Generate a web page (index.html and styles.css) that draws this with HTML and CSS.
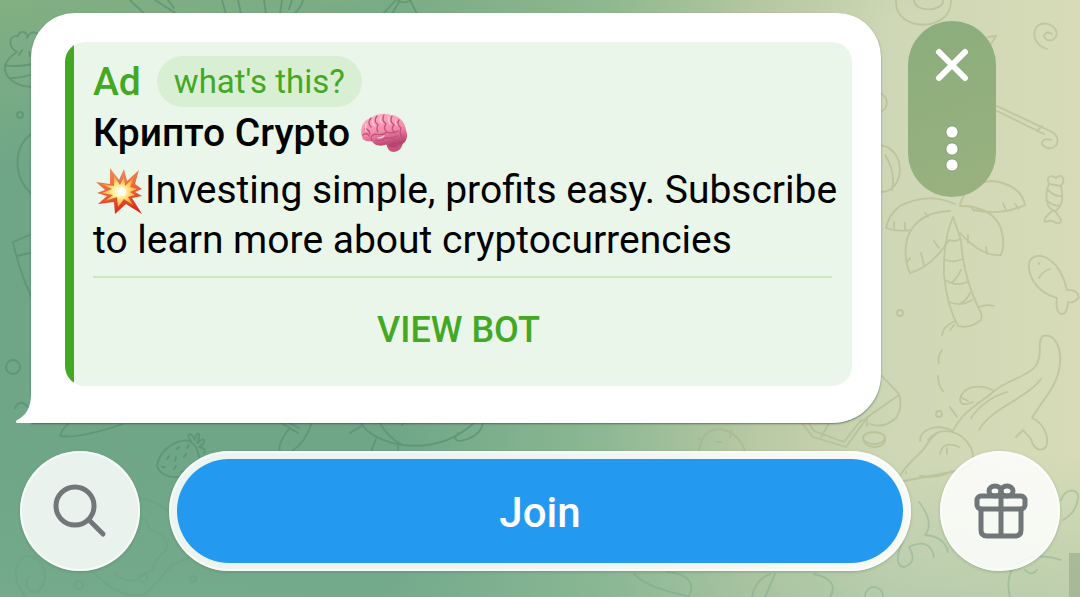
FILE: index.html
```
<!DOCTYPE html>
<html lang="en">
<head>
    <meta charset="UTF-8">
    <meta name="viewport" content="width=device-width, initial-scale=1.0">
    <title>Channel</title>
    <link rel="stylesheet" href="styles.css">
</head>
<body>
<svg class="wallpaper" viewBox="0 0 1080 597" preserveAspectRatio="xMidYMid slice" aria-hidden="true">
    <!-- left side -->
    <g class="doodle-dark">
        <path d="M17 52C8 47 8 35 18 36C20 28 29 33 27 38C30 30 38 31 40 38M17 52C9 57 4 63 5 70C7 80 18 87 34 87M5 65C12 67 22 66 34 64M12 78C20 78 27 76 34 74M22 50l-3 5M29 52l1 4"/>
        <circle cx="20" cy="115" r="3"/>
        <path d="M34 132C12 146 12 178 34 196M34 233L13 242C18 264 25 285 34 302M17 256L34 252"/>
        <circle cx="13" cy="367" r="7"/>
        <path d="M130 0C135 6 142 10 144 14M155 0L177 14M168 0L174 8M222 0L226 14M238 0L241 14M264 0L266 14M282 0L280 14M303 0Q301 8 294 14M292 0L289 9M396 0L383 14M400 0L392 14M410 0L417 14M398 1Q405 4 411 0"/>
        <path d="M15 408q5-10 13-1M73 421Q63 426 60 436Q78 439 123 424M280 422l18 11M287 422l12 6M289 429Q277 444 280 452M312 422Q306 442 291 452M360 422Q371 440 403 445Q445 450 475 422M379 422Q390 440 403 445M350 433l13-8M376 439l-5 13M398 444v8M455 438Q457 443 468 439Q481 434 483 423M455 438l3-5M402 425l2-3"/>
        <path d="M157 466C159 453 169 444 181 441C191 438 198 447 199 457M157 466C159 473 168 478 178 477M192 443C184 433 191 431 195 440M195 440C196 429 202 433 197 443M198 443C204 435 208 442 199 447M199 447Q207 448 204 453M199 434v6M177 449l2-2M187 448l2-3M167 459l2-3M175 461l1-4M184 457l2-3M162 467h3M174 469l2-3M181 472l3-1"/>
    </g>
    <g class="doodle-faint">
        <path d="M140 498Q157 501 169 512M140 518C151 519 143 528 156 532C169 537 170 548 162 554C153 559 158 571 145 573C137 584 123 582 116 574M92 571C108 588 129 600 146 594L172 565L190 557M26 596C12 583 12 558 29 556C47 559 50 583 37 592C27 594 22 579 31 576"/>
        <circle cx="79" cy="585" r="4"/><circle cx="143" cy="578" r="4"/><circle cx="193" cy="579" r="3"/>
        <path d="M634 574C650 590 678 593 690 597M667 572C691 574 695 586 689 595M752 597Q755 580 770 574M765 597L775 574M814 574Q840 580 830 597"/>
        <circle cx="874" cy="596" r="9"/>
        <path d="M919 502Q935 523 925 535Q944 536 948 552M903 540Q892 566 904 567Q918 563 909 547Q930 537 934 557M1061 500C1065 487 1080 488 1078 499Q1076 513 1063 520M1010 597C1000 555 1040 552 1061 560M1025 570q6 7 12 0"/>
    </g>
    <!-- right side -->
    <g class="doodle-light">
        <path d="M699 451C702 420 736 424 745 451M700 439l-2-1M732 430l-2 7M716 442h5M801 422L813 437L846 447L867 418M808 422l6 9L844 442L861 420M821 437l9-15"/>
        <ellipse cx="874" cy="438" rx="11" ry="6"/><path d="M863 438q1 9 12 9q11-1 10-9"/>
        <path d="M896 0C894 33 952 33 951 0M914 0C914 13 944 12 943 0M988 37l8-1l-5 8M880 93C890 98 888 111 880 111M880 145C908 149 905 193 880 192M885 155Q896 172 892 190"/>
        <path d="M1047 49C1028 43 1032 20 1048 24C1062 29 1057 43 1047 40C1041 36 1046 30 1052 34M997 106L1052 132C1062 139 1057 150 1048 148C1037 146 1043 136 1051 140M997 111L1044 134M1037 131l5-5"/>
        <path d="M1049 184C1045 175 1052 175 1056 178C1062 172 1066 180 1061 186C1064 199 1062 207 1055 211C1045 209 1045 193 1049 184M1049 184L1061 186M1048 190Q1055 197 1062 196M1046 200Q1053 206 1060 206M1052 211Q1041 221 1046 222Q1052 219 1056 223Q1063 224 1060 218L1055 211"/>
        <path d="M955 204Q928 192 900 206Q889 214 886 228Q897 232 911 230M950 211Q916 212 907 239Q903 258 910 273Q932 267 949 240M960 206Q990 206 1000 226Q1006 242 1001 255Q982 257 960 233M960 204Q967 182 993 181Q1021 185 1025 205Q1000 216 974 210M894 222v6M905 223v6M925 213l3 4M934 241l5 7M921 253l3 12M910 258l-3 4M968 235v8M986 247l1 7M1003 203l3 7M1015 204l4 5M970 206l4 5"/>
        <path d="M953 217Q943 240 944 275Q947 306 958 326Q970 329 981 320Q983 315 979 309Q963 276 961 240L953 217M949 240Q956 242 960 239M946 260Q954 263 962 259M945 280Q957 287 967 282M949 302Q961 307 972 300M961 270Q958 277 952 283M970 293Q966 301 961 303M979 307Q986 304 994 306M955 321Q943 326 942 335M954 325l-4 5M942 350Q937 357 939 363M938 376Q938 386 943 391M950 407l7 10"/>
        <circle cx="900" cy="313" r="3"/><circle cx="939" cy="414" r="3"/>
        <path d="M1057 298C1034 292 1024 269 1031 259C1040 250 1060 260 1067 290Q1077 289 1079 297Q1074 304 1068 302Q1067 315 1061 314Q1055 311 1057 298ZM1039 278Q1043 271 1050 269M1039 263v1M880 374L899 394Q903 407 896 418Q884 429 870 424M866 418L899 395M860 422q9-7 7 4"/>
        <path d="M953 431C964 409 981 403 994 391C1010 379 1026 377 1035 367C1044 356 1036 340 1043 336C1056 333 1063 350 1059 370C1056 387 1041 402 1032 418C1043 423 1050 436 1046 447C1040 453 1033 448 1031 439L1023 430L1016 437M971 418Q984 399 1007 392M979 430C990 409 1026 399 1041 379M994 391C981 384 963 385 960 399C960 407 968 404 973 402M962 398l6 3M953 431C937 423 920 429 920 441M928 440C940 425 962 430 971 448C977 461 969 470 956 471L899 482C896 478 908 464 919 454C928 447 925 442 936 434M940 454Q943 440 959 447M947 448v6M906 472v1M920 476Q940 479 952 471"/>
    </g>
</svg>
<div class="scroll-hint"></div>

<main class="chat">
    <div class="message-row">
        <article class="bubble">
            <svg class="bubble-tail" viewBox="0 0 30 40" aria-hidden="true">
                <path d="M15 0V8C15 21 10 30 1 34Q-1 36 1 37H30V0Z"/>
            </svg>
            <section class="ad">
                <div class="ad-head">
                    <span class="ad-label">Ad</span>
                    <button type="button" class="ad-info">what's this?</button>
                </div>
                <h1 class="ad-title">Крипто Crypto
                    <svg class="emoji" viewBox="0 0 48 40" role="img" aria-label="brain">
                        <defs>
                            <linearGradient id="brainFill" x1="0" y1="0" x2="0.3" y2="1">
                                <stop offset="0" stop-color="#ffb8cb"/>
                                <stop offset="0.6" stop-color="#f48bab"/>
                                <stop offset="1" stop-color="#b84370"/>
                            </linearGradient>
                        </defs>
                        <path d="M26 29Q27 39 34 39Q42 38 43 29Z" fill="#c9527c"/>
                        <path d="M2 24C-1 15 4 6 11 5C16 0 26 0 31 2C39 2 45 9 46 17C49 25 45 32 39 32C35 36 29 35 27 31C22 34 14 33 12 28C8 29 3 28 2 24Z" fill="url(#brainFill)"/>
                        <path d="M11 5Q7 10 11 14M5 16Q9 16 10 21M17 3Q13 8 18 12Q16 16 18 19M24 2Q21 7 26 11Q23 15 26 18M32 3Q29 8 34 12Q30 16 35 20M39 7Q36 11 41 15Q39 20 42 24M12 28Q9 22 16 21Q23 23 27 19Q33 21 38 18M16 27Q22 29 25 25Q32 26 37 23M27 31Q31 27 38 29M3 22Q7 19 9 23" fill="none" stroke="#c34f7c" stroke-width="1.3" stroke-linecap="round"/>
                        <path d="M13 7Q12 11 15 13M21 4Q19 8 22 10M29 4Q28 8 30 11M36 7Q34 10 37 12M6 11Q5 15 6 18M18 25Q22 25 24 23" fill="none" stroke="#ffd0dd" stroke-width="1.2" stroke-linecap="round"/>
                    </svg>
                </h1>
                <p class="ad-text"><svg class="emoji emoji-boom" viewBox="0 0 52 48" role="img" aria-label="collision">
                        <defs>
                            <linearGradient id="boomFill" x1="0.4" y1="0" x2="0.6" y2="1">
                                <stop offset="0" stop-color="#f08a62"/>
                                <stop offset="0.5" stop-color="#ea6337"/>
                                <stop offset="1" stop-color="#d9261c"/>
                            </linearGradient>
                            <radialGradient id="boomCore">
                                <stop offset="0" stop-color="#ffffff"/>
                                <stop offset="0.35" stop-color="#fff3a0"/>
                                <stop offset="1" stop-color="#ffa52e"/>
                            </radialGradient>
                        </defs>
                        <path d="M17 1L26 13L31 2L34 14L46 3L42 17L49 22L42 25L49 29L39 31L49 47L33 37L22 47L21 35L5 37L14 29L4 26L12 23L3 15L17 17Z" fill="url(#boomFill)"/>
                        <path d="M21 9L27 18L31 10L32 19L41 10L37 20L44 22L37 25L42 28L35 30L40 38L31 32L25 40L24 30L12 34L20 28L9 26L19 22L9 17L21 19Z" fill="url(#boomCore)"/>
                        <circle cx="29" cy="25" r="4" fill="#fff"/>
                    </svg>Investing simple, profits easy. Subscribe to learn more about cryptocurrencies</p>
                <button type="button" class="ad-action">VIEW BOT</button>
            </section>
        </article>
        <div class="ad-controls">
            <button type="button" class="control" aria-label="Close ad">
                <svg viewBox="0 0 40 40" class="icon-close"><path d="M7 7L33 33M33 7L7 33"/></svg>
            </button>
            <button type="button" class="control control-more" aria-label="More">
                <svg viewBox="0 0 16 52" class="icon-dots">
                    <circle cx="8" cy="9" r="6"/><circle cx="8" cy="26" r="6"/><circle cx="8" cy="42" r="6"/>
                </svg>
            </button>
        </div>
    </div>

    <div class="bottom-bar">
        <button type="button" class="round-button" aria-label="Search">
            <svg viewBox="0 0 60 60" class="icon-line">
                <circle cx="25" cy="25" r="19"/><path d="M39 39L53 53"/>
            </svg>
        </button>
        <div class="join-frame">
            <button type="button" class="join-button">Join</button>
        </div>
        <button type="button" class="round-button" aria-label="Send a gift">
            <svg viewBox="0 0 60 60" class="icon-line">
                <rect x="7" y="15" width="48" height="13" rx="4"/>
                <path d="M11 28V49Q11 55 17 55H45Q51 55 51 49V28M31 15V55"/>
                <ellipse cx="25" cy="10" rx="6" ry="5"/><ellipse cx="37" cy="10" rx="6" ry="5"/>
            </svg>
        </button>
    </div>
</main>
</body>
</html>
```

FILE: styles.css
```
* {
    box-sizing: border-box;
}
body {
    margin: 0;
    min-height: 100vh;
    font-family: Roboto, "Noto Sans", sans-serif;
    color: #000;
    background: linear-gradient(170deg, rgba(150, 185, 125, 0.5) 0, rgba(150, 185, 125, 0) 22%),
        linear-gradient(0deg, rgba(130, 180, 150, 0.3) 0, rgba(130, 180, 150, 0) 24%),
        linear-gradient(90deg, #6fa688 0, #6ea687 36%, #8db893 56%, #b8c9a4 70%, #cfd7b6 83%, #d7dbb7 100%);
}
button {
    font-family: inherit;
    border: none;
    padding: 0;
    margin: 0;
    background: none;
    cursor: pointer;
}
svg {
    display: block;
}
.wallpaper {
    position: absolute;
    top: 0;
    left: 0;
    width: 100%;
    height: 100%;
    z-index: -1;
    fill: none;
    stroke-width: 1.8;
    stroke-linecap: round;
    stroke-linejoin: round;
}
.doodle-dark {
    stroke: #558e70;
    opacity: 0.65;
}
.doodle-faint {
    stroke: #649c7e;
    opacity: 0.3;
}
.doodle-light {
    stroke: #a9ae80;
    opacity: 0.45;
}
.scroll-hint {
    position: absolute;
    right: 0;
    bottom: 0;
    width: 11px;
    height: 44px;
    background: rgba(130, 150, 120, 0.4);
}
.chat {
    display: flex;
    flex-direction: column;
    gap: 28px;
    padding: 13px 20px 24px;
}

/* message */
.message-row {
    display: flex;
    align-items: flex-start;
    gap: 27px;
    padding: 0 64px 0 11px;
}
.bubble {
    position: relative;
    flex: 1;
    padding: 29px 29px 37px 34px;
    background: #fff;
    border-radius: 44px 44px 48px 0;
    box-shadow: 0 1px 2px rgba(40, 70, 50, 0.6);
}
.bubble-tail {
    position: absolute;
    left: -15px;
    bottom: -3px;
    width: 30px;
    height: 40px;
    fill: #fff;
}
.ad {
    padding: 14px 14px 0 28px;
    border-radius: 20px;
    background: linear-gradient(90deg, #43a824 9px, #ebf6ea 9px);
}
.ad-head {
    display: flex;
    align-items: center;
    gap: 16px;
}
.ad-label {
    font-size: 39px;
    font-weight: 500;
    line-height: 48px;
    color: #43a824;
}
.ad-info {
    height: 51px;
    padding: 0 17px;
    border-radius: 26px;
    background: #d8efd4;
    color: #43a824;
    font-size: 33px;
}
.ad-title {
    display: flex;
    align-items: center;
    gap: 10px;
    margin: 0;
    font-size: 39px;
    font-weight: 500;
    line-height: 52px;
}
.emoji {
    width: 48px;
    height: 40px;
}
.emoji-boom {
    display: inline-block;
    width: 52px;
    height: 48px;
    vertical-align: -12px;
}
.ad-text {
    margin: 6px 0 0;
    font-size: 39px;
    line-height: 50px;
}
.ad-action {
    display: block;
    width: calc(100% - 6px);
    height: 110px;
    margin-top: 11px;
    padding: 0 8px 4px 0;
    border-top: 2px solid #cbe8c0;
    color: #43a824;
    font-size: 36px;
    font-weight: 500;
}
.ad-controls {
    display: flex;
    flex-direction: column;
    width: 88px;
    margin-top: 8px;
    border-radius: 44px;
    background: linear-gradient(160deg, #8aae7c, #9ab17f);
}
.control {
    display: flex;
    align-items: center;
    justify-content: center;
    height: 88px;
}
.control-more {
    padding-bottom: 8px;
}
.icon-close {
    width: 40px;
    height: 40px;
    fill: none;
    stroke: #fff;
    stroke-width: 6;
    stroke-linecap: round;
}
.icon-dots {
    width: 16px;
    height: 52px;
    fill: #fff;
    stroke: rgba(70, 100, 60, 0.4);
    stroke-width: 1;
}

/* bottom bar */
.bottom-bar {
    display: flex;
    align-items: center;
    gap: 29px;
}
.round-button {
    display: flex;
    align-items: center;
    justify-content: center;
    flex: none;
    width: 120px;
    height: 120px;
    border-radius: 50%;
    background: rgba(255, 255, 255, 0.85);
    box-shadow: inset 0 0 0 2px rgba(255, 255, 255, 0.6), 0 1px 3px rgba(60, 90, 60, 0.3);
}
.icon-line {
    width: 60px;
    height: 60px;
    fill: none;
    stroke: #717679;
    stroke-width: 5;
    stroke-linecap: round;
    stroke-linejoin: round;
}
.join-frame {
    flex: 1;
    padding: 8px;
    border-radius: 60px;
    background: rgba(255, 255, 255, 0.87);
    box-shadow: inset 0 0 0 2px rgba(255, 255, 255, 0.6), 0 1px 3px rgba(60, 90, 60, 0.3);
}
.join-button {
    display: block;
    width: 100%;
    height: 104px;
    padding-top: 2px;
    border-radius: 52px;
    background: #2399f0;
    color: #fff;
    font-size: 42px;
    font-weight: 500;
}
```
